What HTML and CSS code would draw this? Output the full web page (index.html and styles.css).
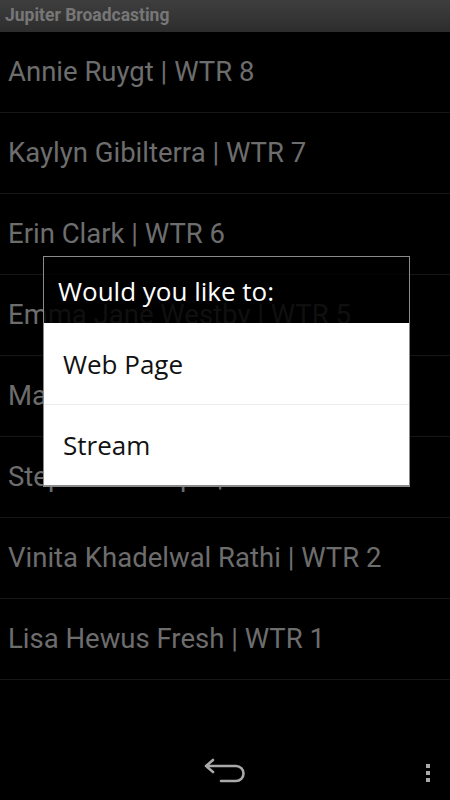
FILE: index.html
```html
<!DOCTYPE html>
<html lang="en">
<head>
  <meta charset="UTF-8" />
  <meta name="viewport" content="width=device-width, initial-scale=1.0"/>
  <title>Jupiter Broadcasting</title>
  <link rel="stylesheet" href="styles.css">
</head>
<body>
  <div class="screen">
    <header class="titlebar">Jupiter Broadcasting</header>

    <ul class="list">
      <li>Annie Ruygt | WTR 8</li>
      <li>Kaylyn Gibilterra | WTR 7</li>
      <li>Erin Clark | WTR 6</li>
      <li>Emma Jane Westby | WTR 5</li>
      <li>Marie Lin | WTR 4</li>
      <li>Stephanie Grupe | WTR 3</li>
      <li>Vinita Khadelwal Rathi | WTR 2</li>
      <li>Lisa Hewus Fresh | WTR 1</li>
    </ul>

    <nav class="navbar">
      <div class="nav-spacer"></div>
      <svg class="back" width="46" height="30" viewBox="0 0 46 30">
        <path d="M4 8 H34 a7.5 7.5 0 0 1 0 15 H19 M4 8 L11 2 M4 8 L11 14" fill="none" stroke="#a9a9a9" stroke-width="2.6" stroke-linecap="round" stroke-linejoin="round"/>
      </svg>
      <div class="nav-spacer right">
        <div class="dots"><span></span><span></span><span></span></div>
      </div>
    </nav>

    <div class="dialog">
      <div class="dialog-title">Would you like to:</div>
      <div class="dialog-body">
        <div class="option">Web Page</div>
        <div class="option">Stream</div>
      </div>
    </div>
  </div>
</body>
</html>
```

FILE: styles.css
```css
* {
  margin: 0;
  padding: 0;
  box-sizing: border-box;
}

body {
  font-family: Roboto, 'Noto Sans', sans-serif;
  background-color: #000;
}

.screen {
  position: relative;
  width: 450px;
  height: 800px;
  display: flex;
  flex-direction: column;
  background-color: #000;
  overflow: hidden;
}

.titlebar {
  height: 32px;
  padding: 3px 0 0 5px;
  background: linear-gradient(#3e3e3e, #2d2d2d);
  color: #777;
  font-weight: bold;
  font-size: 17.5px;
  line-height: 24px;
}

.list {
  list-style: none;
  flex: 1;
}

.list li {
  height: 81px;
  padding: 0 0 0 8px;
  display: flex;
  align-items: center;
  padding-bottom: 1px;
  border-bottom: 1px solid #161616;
  color: #6d6d6d;
  font-size: 27.5px;
  white-space: nowrap;
}

.navbar {
  height: 48px;
  display: flex;
  align-items: center;
  padding-bottom: 6px;
}

.nav-spacer {
  flex: 1;
}

.nav-spacer.right {
  display: flex;
  justify-content: flex-end;
  padding-right: 20px;
}

.back {
  display: block;
  margin-left: 19px;
}

.dots {
  display: flex;
  flex-direction: column;
  gap: 3px;
}

.dots span {
  width: 4px;
  height: 4px;
  background-color: #a9a9a9;
}

.dialog {
  position: absolute;
  left: 43px;
  top: 256px;
  width: 367px;
  border: 1px solid #8a8a8a;
  border-bottom-width: 2px;
}

.dialog-title {
  height: 66px;
  padding: 17px 0 0 14px;
  background-color: rgba(0, 0, 0, 0.86);
  color: #fff;
  font-family: 'Open Sans', 'Noto Sans', sans-serif;
  font-size: 26px;
  line-height: 34px;
}

.dialog-body {
  background-color: #fff;
}

.option {
  height: 81px;
  display: flex;
  align-items: center;
  padding-left: 19px;
  color: #111;
  font-family: 'Open Sans', 'Noto Sans', sans-serif;
  font-size: 26px;
}

.option + .option {
  border-top: 1px solid #ececec;
}
```
